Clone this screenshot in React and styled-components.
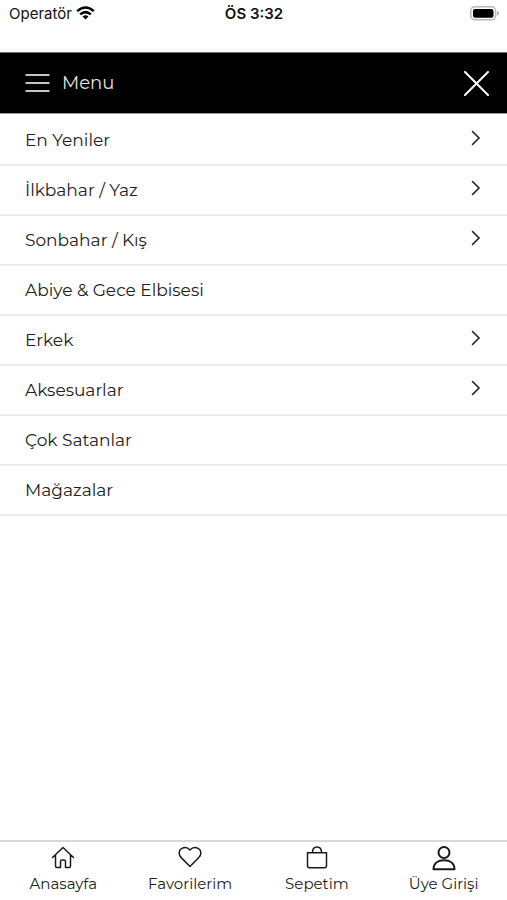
import styled, { createGlobalStyle } from "styled-components";

const GlobalStyle = createGlobalStyle`
  * {
    box-sizing: border-box;
  }

  body {
    margin: 0;
    background-color: #fff;
    color: #222;
    font-family: Montserrat, Inter, sans-serif;
  }
`;

const Screen = styled.div`
  min-height: 100vh;
  display: flex;
  flex-direction: column;
`;

const StatusBar = styled.div`
  display: grid;
  grid-template-columns: 1fr auto 1fr;
  align-items: center;
  height: 26px;
  margin-bottom: 26px;
  padding: 0 8px 0 9px;
  font-family: Inter, sans-serif;
  font-size: 15px;
  color: #111;
`;

const Carrier = styled.div`
  display: flex;
  align-items: center;
  gap: 4px;
`;

const Clock = styled.time`
  font-weight: 600;
`;

const Battery = styled.svg`
  justify-self: end;
`;

const Header = styled.header`
  display: flex;
  align-items: center;
  justify-content: space-between;
  height: 62px;
  padding: 0 18px 0 25px;
  background-color: #000;
  border-top: 1px solid #777;
  border-bottom: 1px solid #999;
`;

const HeaderTitle = styled.h1`
  display: flex;
  align-items: center;
  gap: 12px;
  margin: 0;
  font-size: 18px;
  font-weight: 400;
  color: #e4e4e4;
`;

const CloseButton = styled.button`
  display: flex;
  padding: 0;
  background: none;
  border: none;
  cursor: pointer;
`;

const MenuList = styled.ul`
  flex: 1;
  margin: 0;
  padding: 2px 0 0;
  list-style: none;
`;

const MenuLink = styled.a`
  display: flex;
  align-items: center;
  justify-content: space-between;
  height: 50px;
  padding: 0 26px 0 25px;
  border-bottom: 2px solid #ececec;
  font-size: 17px;
  color: #222;
  text-decoration: none;
`;

const Chevron = styled.svg`
  margin-bottom: 4px;
`;

const TabBar = styled.nav`
  display: grid;
  grid-template-columns: repeat(4, 1fr);
  height: 60px;
  border-top: 2px solid #d8d8d8;
`;

const TabLink = styled.a`
  display: flex;
  flex-direction: column;
  align-items: center;
  gap: 3px;
  padding-top: 3px;
  font-size: 15px;
  line-height: 20px;
  color: #222;
  text-decoration: none;
`;

const TabIcon = styled.svg`
  fill: none;
  stroke: #1a1a1a;
  stroke-width: ${(props) => (props.$bold ? 2 : 1.5)};
  stroke-linecap: round;
  stroke-linejoin: round;
`;

const menuItems = [
  { label: "En Yeniler", hasChildren: true },
  { label: "İlkbahar / Yaz", hasChildren: true },
  { label: "Sonbahar / Kış", hasChildren: true },
  { label: "Abiye & Gece Elbisesi", hasChildren: false },
  { label: "Erkek", hasChildren: true },
  { label: "Aksesuarlar", hasChildren: true },
  { label: "Çok Satanlar", hasChildren: false },
  { label: "Mağazalar", hasChildren: false },
];

const tabs = [
  {
    label: "Anasayfa",
    icon: (
      <path d="M1.500 12.500 12 2.500l10.500 10M4.500 10v11q0 1.500 1.500 1.500h3.500v-6q0-1.500 1.500-1.500h2q1.500 0 1.500 1.500v6H18q1.500 0 1.500-1.500V10" />
    ),
  },
  {
    label: "Favorilerim",
    icon: (
      <path d="M12 21.500 3.200 12.600C.2 9.500.7 5.300 3.500 3.700 6.500 2 9.800 2.500 12 5c2.200-2.500 5.500-3 8.500-1.300 2.800 1.600 3.300 5.800.3 8.900Z" />
    ),
  },
  {
    label: "Sepetim",
    icon: (
      <>
        <path d="M2.500 7.800h19v13q0 2-2 2h-15q-2 0-2-2Z" />
        <path d="M7.500 7.500C7.500 4.200 9.200 2 12 2s4.500 2.200 4.500 5.500" />
      </>
    ),
  },
  {
    label: "Üye Girişi",
    bold: true,
    icon: (
      <>
        <circle cx="12" cy="7.500" r="5.500" />
        <path d="M1.500 24.200c0-6 4.500-9 10.500-9s10.500 3 10.500 9Z" />
      </>
    ),
  },
];

const WifiIcon = () => (
  <svg width="19" height="14" viewBox="0 0 19 14" aria-hidden="true">
    <g fill="none" stroke="#000" strokeWidth="2.500">
      <path d="M1.200 5.100q8.300-7.200 16.600 0" />
      <path d="M4.200 8.400q5.300-4.500 10.600 0" />
    </g>
    <path d="M6.500 10.600q3-2.500 6 0l-3 3Z" />
  </svg>
);

const BatteryIcon = () => (
  <Battery width="29" height="15" viewBox="0 0 29 15" role="img" aria-label="Pil">
    <rect x=".8" y=".8" width="24.800" height="13" rx="4" fill="#fff" stroke="#b8b8b8" strokeWidth="1.500" />
    <rect x="3" y="3" width="20.500" height="8.800" rx="2" />
    <path d="M27 5q2 .8 2 2.400T27 9.800Z" fill="#aaa" />
  </Battery>
);

export default function App() {
  return (
    <>
      <GlobalStyle />
      <Screen>
        <StatusBar>
          <Carrier>
            Operatör
            <WifiIcon />
          </Carrier>
          <Clock>ÖS 3:32</Clock>
          <BatteryIcon />
        </StatusBar>

        <Header>
          <HeaderTitle>
            <svg width="25" height="20" viewBox="0 0 25 20" aria-hidden="true">
              <path d="M.5 2h24M.5 10h24M.5 18h24" stroke="#c4c4c4" strokeWidth="2" />
            </svg>
            Menu
          </HeaderTitle>
          <CloseButton type="button" aria-label="Kapat">
            <svg width="25" height="25" viewBox="0 0 25 25" aria-hidden="true">
              <path d="M1 1l23 23M24 1 1 24" stroke="#fff" strokeWidth="2" strokeLinecap="round" />
            </svg>
          </CloseButton>
        </Header>

        <MenuList>
          {menuItems.map((item) => (
            <li key={item.label}>
              <MenuLink href="#">
                {item.label}
                {item.hasChildren && (
                  <Chevron width="10" height="16" viewBox="0 0 10 16" aria-hidden="true">
                    <path
                      d="m1.500 1.500 6.500 6.500-6.500 6.500"
                      fill="none"
                      stroke="#222"
                      strokeWidth="1.600"
                      strokeLinecap="round"
                    />
                  </Chevron>
                )}
              </MenuLink>
            </li>
          ))}
        </MenuList>

        <TabBar>
          {tabs.map((tab) => (
            <TabLink key={tab.label} href="#">
              <TabIcon width="26" height="26" viewBox="-1 0 26 26" $bold={tab.bold} aria-hidden="true">
                {tab.icon}
              </TabIcon>
              {tab.label}
            </TabLink>
          ))}
        </TabBar>
      </Screen>
    </>
  );
}
